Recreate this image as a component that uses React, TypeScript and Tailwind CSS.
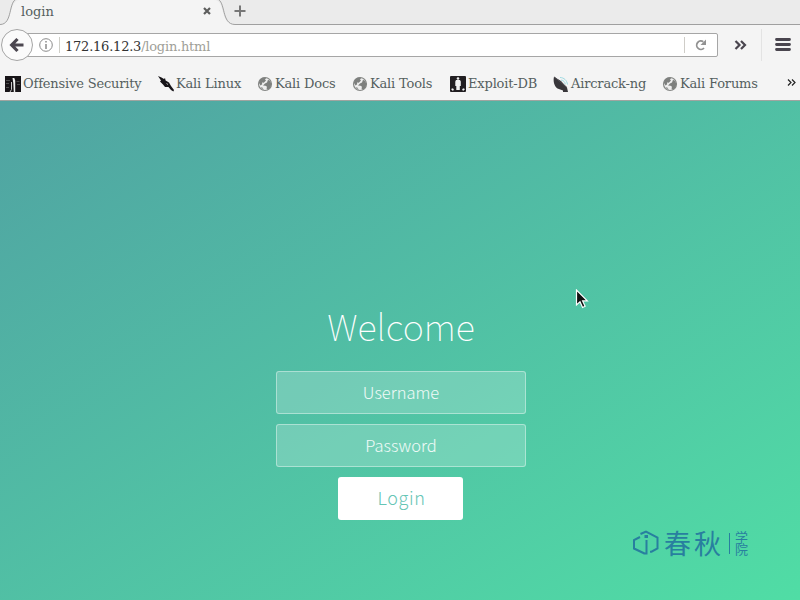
import React from "react";

function Globe() {
  return (
    <svg width="16" height="16" viewBox="0 0 16 16" className="shrink-0">
      <circle cx="8" cy="8" r="6.500" fill="#eeeeee" stroke="#858785" strokeWidth="1.200" />
      <path d="M1.700 6.500 3 3.500 6 1.600 9.500 1.800 8 3.400 9 4.600 6.800 6.800 5 6.600 5.200 8.200 3.500 9.500z" fill="#7e807e" />
      <path d="M11 3.800 13.200 5l1.200 3-1 3.500-2.400 2.300-1.500-1.300.5-1.800L8.500 9.800 6 9.600 8 7.400l2-.8z" fill="#7e807e" />
      <path d="m3.500 11 2 .4L7 14.200 4.500 13z" fill="#9a9c9a" />
    </svg>
  );
}

function OffsecIcon() {
  return (
    <svg width="16" height="16" viewBox="0 0 16 16" className="shrink-0">
      <rect width="16" height="16" fill="#171417" />
      <path d="M1 4.500h4M1 7.500h3M11.500 5.500h3M12 8.500h3M1 11.500h3" stroke="#4d4d4d" strokeWidth="1" />
      <path d="M7.500 2h1.800l.9 2.500V16H8.800L8.300 7z" fill="#eef0ee" />
      <path d="M6.500 6v7.500L5 16" stroke="#c9c9c9" fill="none" />
    </svg>
  );
}

function KaliIcon() {
  return (
    <svg width="16" height="16" viewBox="0 0 16 16" className="shrink-0">
      <path d="m0 0 3.500 1.500L6 3l1-1 .6 2.500L11 6.500 13 10l3 4-.6 1.500-2.400-1.500-2.500-3L7 11 5 8.500 2 5.500 3 4.500z" fill="#171519" />
      <path d="m8.500 7.500 1.500 1" stroke="#f4f4f4" strokeWidth=".7" />
    </svg>
  );
}

function ExploitIcon() {
  return (
    <svg width="16" height="16" viewBox="0 0 16 16" className="shrink-0">
      <rect width="16" height="16" rx="1" fill="#211e21" />
      <circle cx="8" cy="2.500" r="1.300" fill="#f2f2f2" />
      <path d="M6 4h4l.8 1.500V10h-1v4H6.300v-4h-1V5.500z" fill="#f2f2f2" />
      <path d="m1 13 2-.8 1 1.800-1.500.8zM15 13l-2-.8-1 1.800 1.500.8z" fill="#f2f2f2" />
    </svg>
  );
}

function AircrackIcon() {
  return (
    <svg width="16" height="16" viewBox="0 0 16 16" className="shrink-0">
      <path d="M7 1.500c4 0 7 3 7.500 7M8 4c2.500.3 4 2 4.300 4.300" stroke="#9fdbe3" fill="none" />
      <path d="M1 .8C0 5 1 10 4.500 12.500L10 14.500v1.500h5l-1-4.500L8 5z" fill="#38363a" />
      <path d="M1.500 1 14 11.500" stroke="#57555a" strokeWidth=".8" />
    </svg>
  );
}

function Bookmark({ icon, label, className }: { icon: React.ReactNode; label: string; className: string }) {
  return (
    <div className={`flex shrink-0 items-center gap-0.5 whitespace-nowrap ${className}`}>
      {icon}
      <span className="pt-px leading-4 tracking-[-0.17px]">{label}</span>
    </div>
  );
}

function TabBar() {
  return (
    <div className="relative h-[25px] shrink-0 bg-[#ebebeb]">
      <svg width="800" height="25" viewBox="0 0 800 25" className="absolute inset-0">
        <path d="M0 24.500C12 24.500 9 0 20 0H214C226 0 219 24.500 235 24.500V25H0z" fill="#f4f4f4" />
        <path d="M0 24.500C13 24.500 8 1 17 -1M217 -1C226 1 221 24.500 235 24.500H800" fill="none" stroke="#a0a0a0" />
        <path d="m204 8 6 6m0-6-6 6" stroke="#5d5e5d" strokeWidth="2.200" />
        <path d="M234.500 11h11m-5.500-5.500v11" stroke="#777" strokeWidth="2" />
      </svg>
      <span className="relative block pl-[21px] pt-1 leading-4">login</span>
    </div>
  );
}

function NavBar() {
  return (
    <div className="flex h-[43px] shrink-0 items-start pl-px pt-[4px]">
      <div className="z-10 flex size-8 shrink-0 items-center justify-center rounded-full border border-[#a5a5a5] bg-[#fbfbfb]">
        <svg width="16" height="16" viewBox="0 0 16 16">
          <path d="M8.500 2 2.700 8l5.800 6M3 8h11.500" fill="none" stroke="#4c4750" strokeWidth="3.200" />
        </svg>
      </div>
      <div className="-ml-2 mt-[4px] flex h-6 w-[693px] shrink-0 items-center rounded-r-[2px] border border-[#a6a6a6] bg-white">
        <svg width="14" height="14" viewBox="0 0 14 14" className="ml-[13px]">
          <circle cx="7" cy="7" r="6.300" fill="none" stroke="#8b8b8b" />
          <path d="M7 3v1.600M7 6v5" stroke="#8b8b8b" strokeWidth="1.500" />
        </svg>
        <div className="ml-[6px] h-4 w-px bg-[#cfcfc8]" />
        <span className="ml-[5px] mt-[3px] leading-4 tracking-[-0.22px] text-[#333]">
          172.16.12.3<span className="text-[#a0a098]">/login.html</span>
        </span>
        <div className="ml-auto h-4 w-px bg-[#cfcdc8]" />
        <svg width="14" height="14" viewBox="0 0 14 14" className="ml-[9px] mr-[9px]">
          <path d="M9.300 3.700A4.200 4.200 0 1 0 10 10" fill="none" stroke="#929292" strokeWidth="1.800" />
          <path d="M12 1.500v5.500H6.500z" fill="#929292" />
        </svg>
      </div>
      <svg width="14" height="12" viewBox="0 0 14 12" className="ml-4 mt-[10px] shrink-0">
        <path d="m1.500 2 4 4-4 4M7 2l4 4-4 4" fill="none" stroke="#49454e" strokeWidth="2.200" />
      </svg>
      <div className="ml-[13px] h-8 w-px bg-[#e3e3e3]" />
      <svg width="16" height="14" viewBox="0 0 16 14" className="ml-[13px] mt-[9px] shrink-0">
        <path d="M1.500 1.500h13M1.500 6.500h13M1.500 11.500h13" stroke="#49454e" strokeWidth="2.800" strokeLinecap="round" />
      </svg>
    </div>
  );
}

function Academy() {
  return (
    <div className="absolute left-[632px] top-[428px] flex h-7 items-center text-[#287f9f]">
      <svg width="28" height="28" viewBox="0 0 28 28" fill="none" stroke="currentColor" strokeWidth="2">
        <path d="M8.500 5 14 2.500l11.500 6v11l-6 3.200H18M8 8 2 11v8.500l10.500 5M14.500 11v13.500h-3" />
        <path d="M12.500 7.500h3.500" strokeWidth="3" />
      </svg>
      <span className="ml-[4px] w-[60px] whitespace-nowrap text-[27px] leading-7 tracking-[3px]">春秋</span>
      <span className="ml-[5px] mr-[5px] h-[21px] w-px bg-[#287f9f]" />
      <span className="flex flex-col text-[13px] leading-3">
        <span>学</span>
        <span>院</span>
      </span>
    </div>
  );
}

export default function App() {
  return (
    <div className="flex h-[600px] w-[800px] flex-col overflow-hidden bg-[#f4f4f4] text-[13px] text-[#555f60] [font-family:'DejaVu_Serif',serif]">
      <TabBar />
      <NavBar />
      <div className="flex h-[33px] shrink-0 items-start border-b border-[#a0a4a0] pl-[5px] pt-[7px]">
        <Bookmark icon={<OffsecIcon />} label="Offensive Security" className="w-[153px]" />
        <Bookmark icon={<KaliIcon />} label="Kali Linux" className="w-[99px]" />
        <Bookmark icon={<Globe />} label="Kali Docs" className="w-[95px]" />
        <Bookmark icon={<Globe />} label="Kali Tools" className="w-[98px]" />
        <Bookmark icon={<ExploitIcon />} label="Exploit-DB" className="w-[103px]" />
        <Bookmark icon={<AircrackIcon />} label="Aircrack-ng" className="w-[109px]" />
        <Bookmark icon={<Globe />} label="Kali Forums" className="w-[125px]" />
        <svg width="9" height="7" viewBox="0 0 9 7" className="mt-[4px] shrink-0">
          <path d="m1 .5 3 3-3 3m4-6 3 3-3 3" fill="none" stroke="#222" strokeWidth="1.200" />
        </svg>
      </div>
      <main className="relative flex min-h-0 flex-1 flex-col items-center bg-linear-to-br from-[#50a3a2] to-[#50dda5] pl-0.5 text-white [font-family:'Noto_Sans_CJK_SC',sans-serif]">
        <h1 className="mt-[195px] h-[75px] text-[36px] font-thin leading-[58px]">Welcome</h1>
        <form className="flex flex-col items-center">
          <input
            placeholder="Username"
            className="mb-[10px] block h-[43px] w-[250px] rounded-[3px] border border-white/40 bg-white/20 pb-0.5 text-center text-[16.5px] font-light outline-none placeholder:text-white/90"
          />
          <input
            placeholder="Password"
            className="mb-[10px] block h-[43px] w-[250px] rounded-[3px] border border-white/40 bg-white/20 pb-0.5 text-center text-[16.5px] font-light outline-none placeholder:text-white/90"
          />
          <button type="button" className="mr-px h-[43px] w-[125px] rounded-[3px] bg-white pb-0.5 pl-0.5 text-[18px] font-light tracking-[0.6px] text-[#65c5b5]">
            Login
          </button>
        </form>
        <Academy />
        <svg width="14" height="20" viewBox="0 0 14 20" className="absolute left-[575px] top-[188px]">
          <path d="M1.500 1v15l3.500-3.200 2.600 5.700 2.500-1.200-2.500-5.400h4.700z" fill="#111" stroke="#fff" strokeWidth="1.200" />
        </svg>
      </main>
    </div>
  );
}
